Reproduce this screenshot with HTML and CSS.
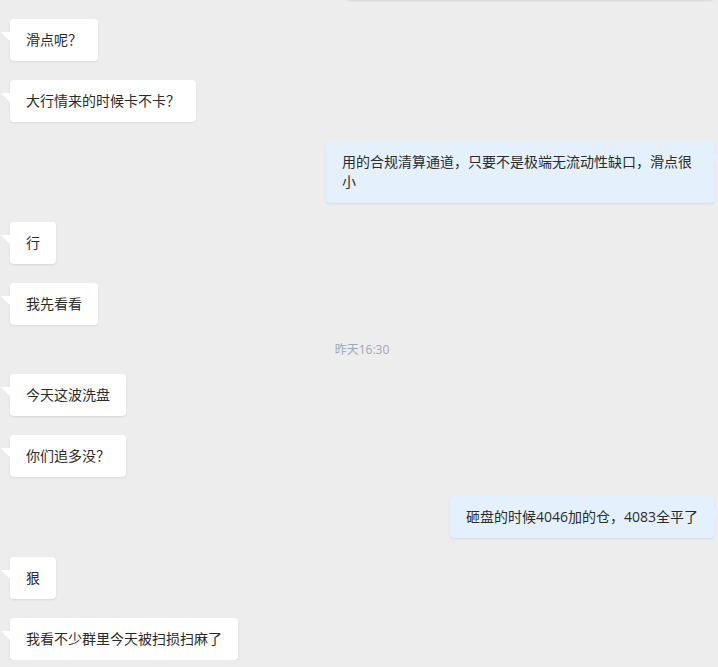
FILE: index.html
```html
<!DOCTYPE html>
<html lang="zh-CN">
<head>
<meta charset="utf-8">
<title>聊天记录</title>
<link rel="stylesheet" href="styles.css">
</head>
<body>
<div class="chat">
  <div class="msg mine lead"><div class="bubble blank"></div></div>
  <div class="msg"><div class="bubble">滑点呢？</div></div>
  <div class="msg"><div class="bubble">大行情来的时候卡不卡？</div></div>
  <div class="msg mine"><div class="bubble">用的合规清算通道，只要不是极端无流动性缺口，滑点很小</div></div>
  <div class="msg"><div class="bubble">行</div></div>
  <div class="msg"><div class="bubble">我先看看</div></div>
  <div class="time">昨天16:30</div>
  <div class="msg"><div class="bubble">今天这波洗盘</div></div>
  <div class="msg"><div class="bubble">你们追多没？</div></div>
  <div class="msg mine"><div class="bubble">砸盘的时候4046加的仓，4083全平了</div></div>
  <div class="msg"><div class="bubble">狠</div></div>
  <div class="msg"><div class="bubble">我看不少群里今天被扫损扫麻了</div></div>
</div>
</body>
</html>
```

FILE: styles.css
```css
html, body {
  margin: 0;
  padding: 0;
  background: #ededed;
  overflow: hidden;
}

body {
  font-family: "Open Sans", "Noto Sans CJK SC", "Microsoft YaHei", sans-serif;
  font-size: 14px;
  color: #2b2b2b;
}

.chat {
  display: flex;
  flex-direction: column;
  gap: 19px;
  padding: 0 4px 0 10px;
}

.msg {
  display: flex;
  justify-content: flex-start;
}

.msg.mine {
  justify-content: flex-end;
}

/* previous message, scrolled almost out of view */
.msg.lead {
  margin-top: -42px;
}

.bubble {
  position: relative;
  box-sizing: border-box;
  max-width: 388px;
  padding: 11px 16px;
  line-height: 20px;
  background: #fff;
  border-radius: 4px;
  box-shadow: 0 1px 2px rgba(0, 0, 0, 0.09);
}

.bubble.blank {
  width: 368px;
  height: 42px;
}

.bubble::before {
  content: "";
  position: absolute;
  top: 13px;
  left: -9px;
  width: 0;
  height: 0;
  border-top: 9px solid #fff;
  border-left: 9px solid transparent;
}

.mine .bubble {
  background: #e4f1fc;
}

.mine .bubble::before {
  left: auto;
  right: -9px;
  border-top-color: #e4f1fc;
  border-left: 0;
  border-right: 9px solid transparent;
}

.time {
  align-self: center;
  font-size: 12px;
  line-height: 11px;
  color: #9ca9b9;
}
```
